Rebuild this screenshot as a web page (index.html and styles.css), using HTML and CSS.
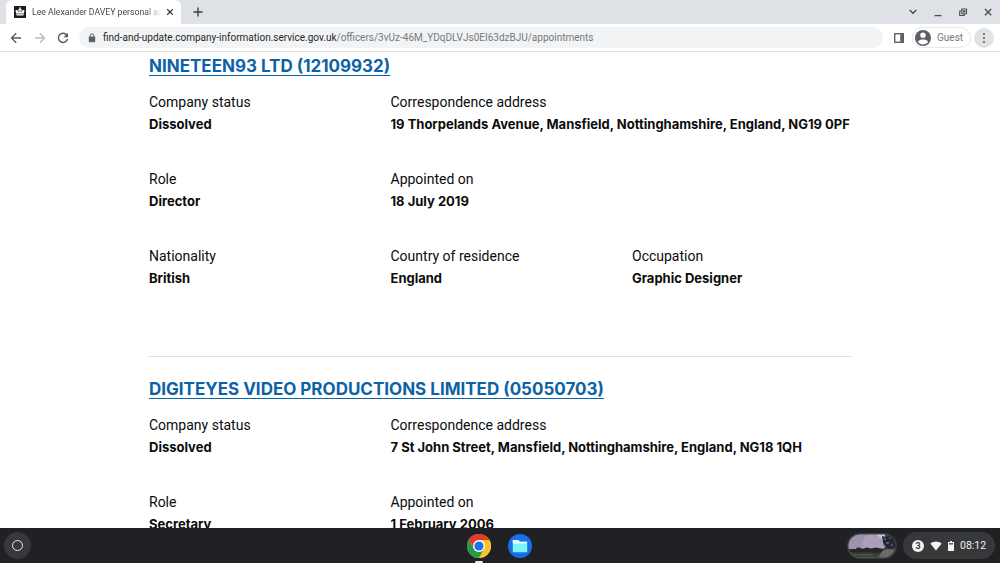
FILE: index.html
```html
<!DOCTYPE html>
<html lang="en">
<head>
  <meta charset="UTF-8">
  <meta name="viewport" content="width=device-width, initial-scale=1.0">
  <title>Lee Alexander DAVEY personal appointments</title>
  <link rel="stylesheet" href="styles.css">
</head>
<body>
  <!-- Tab strip -->
  <div class="tab-strip">
    <div class="tab">
      <svg class="favicon" viewBox="0 0 12 12">
        <rect width="12" height="12" fill="#1b1d1f"/>
        <path d="M2.6 9.6 2 6.2C1 5.3 1.5 4 2.7 4.1c.8 0 1.2.7 1 1.4l.9.6-.1-1.7c-.5-.5-.2-1.2.4-1.3l.6.2V2.4h-.4v-.6h.5v-.5h.8v.5h.5v.6h-.4v.9l.6-.2c.6.1.9.8.4 1.3l-.1 1.7.9-.6c-.2-.7.2-1.4 1-1.4C10.500 4 11 5.300 10 6.200l-.6 3.400z" fill="#fff"/>
        <path d="M2.500 7.800h7M6 4.200v2" stroke="#1b1d1f" stroke-width=".6"/>
      </svg>
      <span class="tab-title">Lee Alexander DAVEY personal appointments</span>
      <svg class="tab-close" viewBox="0 0 8 8"><path d="M1.200 1.200l5.600 5.600M6.800 1.200L1.200 6.800" stroke="#3c4043" stroke-width="1.300"/></svg>
    </div>
    <svg class="new-tab" viewBox="0 0 10 10"><path d="M5 .5v9M.5 5h9" stroke="#3c4043" stroke-width="1.400"/></svg>
    <div class="window-buttons">
      <svg viewBox="0 0 10 10"><path d="M1.700 3l3.300 3.300L8.300 3" fill="none" stroke="#4a4d51" stroke-width="1.400"/></svg>
      <svg viewBox="0 0 10 10"><path d="M1.500 8.600h7" stroke="#4a4d51" stroke-width="1.300"/></svg>
      <svg viewBox="0 0 10 10"><path d="M3.800 2h4.700v4.700H3.800zM3.800 4H1.700v4.500h4.500V6.700M5.500 3.700h1.300V5H5.500z" fill="none" stroke="#4a4d51" stroke-width="1.100"/></svg>
      <svg viewBox="0 0 10 10"><path d="M2 2l6.200 6.200M8.200 2L2 8.200" stroke="#4a4d51" stroke-width="1.400"/></svg>
    </div>
  </div>

  <!-- Toolbar -->
  <div class="toolbar">
    <div class="nav-buttons">
      <svg viewBox="0 0 12 12"><path d="M11 6H2M6.200 1.300L1.500 6l4.700 4.700" fill="none" stroke="#55585c" stroke-width="1.300"/></svg>
      <svg viewBox="0 0 12 12"><path d="M1 6h9M5.800 1.300L10.500 6l-4.700 4.700" fill="none" stroke="#babcbe" stroke-width="1.300"/></svg>
      <svg viewBox="0 0 12 12"><path d="M9.800 3.200A4.600 4.600 0 1 0 10.500 7" fill="none" stroke="#55585c" stroke-width="1.400"/><path d="M11 .8v4.500H6.500z" fill="#55585c"/></svg>
    </div>
    <div class="address-bar">
      <svg class="lock" viewBox="0 0 8 10"><path d="M2.200 4V2.700a1.800 1.800 0 0 1 3.600 0V4" fill="none" stroke="#5f6368"/><rect x=".8" y="3.500" width="6.400" height="5.700" rx=".7" fill="#5f6368"/></svg>
      <span class="url"><span class="host">find-and-update.company-information.service.gov.uk</span>/officers/3vUz-46M_YDqDLVJs0EI63dzBJU/appointments</span>
    </div>
    <svg class="side-panel" viewBox="0 0 10 10"><rect x=".7" y=".7" width="8.600" height="8.600" fill="none" stroke="#5f6368" stroke-width="1.400"/><path d="M6.200 1h3v8h-3z" fill="#5f6368"/></svg>
    <div class="profile">
      <svg viewBox="0 0 16 16"><circle cx="8" cy="8" r="8" fill="#5b5f64"/><circle cx="8" cy="5.200" r="2.700" fill="#fff"/><path d="M2.800 11.800C3.800 9.900 6 9.400 8 9.400s4.200.5 5.200 2.400C12 13.600 10 14.600 8 14.600s-4-1-5.200-2.800z" fill="#fff"/></svg>
      <span>Guest</span>
    </div>
    <div class="menu-button">
      <svg viewBox="0 0 4 12"><g fill="#5f6368"><circle cx="2" cy="2" r="1.100"/><circle cx="2" cy="6" r="1.100"/><circle cx="2" cy="10" r="1.100"/></g></svg>
    </div>
  </div>

  <!-- Page -->
  <main class="content">
    <section class="appointment">
      <h2><a class="name-1" href="#">NINETEEN93 LTD (12109932)</a></h2>
      <div class="grid">
        <dl>
          <dt>Company status</dt>
          <dd>Dissolved</dd>
        </dl>
        <dl class="wide">
          <dt>Correspondence address</dt>
          <dd>19 Thorpelands Avenue, Mansfield, Nottinghamshire, England, NG19 0PF</dd>
        </dl>
        <dl>
          <dt>Role</dt>
          <dd>Director</dd>
        </dl>
        <dl class="wide">
          <dt>Appointed on</dt>
          <dd class="date">18 July 2019</dd>
        </dl>
        <dl>
          <dt>Nationality</dt>
          <dd>British</dd>
        </dl>
        <dl>
          <dt>Country of residence</dt>
          <dd>England</dd>
        </dl>
        <dl>
          <dt>Occupation</dt>
          <dd>Graphic Designer</dd>
        </dl>
      </div>
    </section>

    <section class="appointment">
      <h2><a class="name-2" href="#">DIGITEYES VIDEO PRODUCTIONS LIMITED (05050703)</a></h2>
      <div class="grid">
        <dl>
          <dt>Company status</dt>
          <dd>Dissolved</dd>
        </dl>
        <dl class="wide">
          <dt>Correspondence address</dt>
          <dd>7 St John Street, Mansfield, Nottinghamshire, England, NG18 1QH</dd>
        </dl>
        <dl>
          <dt>Role</dt>
          <dd>Secretary</dd>
        </dl>
        <dl class="wide">
          <dt>Appointed on</dt>
          <dd class="date">1 February 2006</dd>
        </dl>
      </div>
    </section>
  </main>

  <!-- Shelf -->
  <footer class="shelf">
    <div class="shelf-side">
      <div class="launcher"><span></span></div>
    </div>
    <div class="apps">
      <div class="app running">
        <svg viewBox="0 0 24 24">
          <circle cx="12" cy="12" r="12" fill="#fbc02d"/>
          <path d="M12 12L1.600 6A12 12 0 0 1 22.400 6z" fill="#e33b2e"/>
          <path d="M12 6h10.400A12 12 0 0 0 1.600 6L6.800 15z" fill="#e33b2e"/>
          <path d="M1.600 6A12 12 0 0 0 12 24l5.200-9L12 12 6.800 15z" fill="#269a48"/>
          <path d="M22.400 6A12 12 0 0 1 12 24l5.200-9L12 6z" fill="#fbc02d"/>
          <circle cx="12" cy="12" r="6" fill="#fff"/>
          <circle cx="12" cy="12" r="4.600" fill="#1a73e8"/>
        </svg>
      </div>
      <div class="app">
        <svg viewBox="0 0 24 24">
          <circle cx="12" cy="12" r="12" fill="#1a6fe8"/>
          <path d="M4.800 6h5.400l1.800 1.800h7.200v10.400H4.800z" fill="#7df4fb"/>
          <path d="M4.800 6h5.400l1.800 1.800h6.800v1.700H4.800z" fill="#e8ffff"/>
        </svg>
      </div>
    </div>
    <div class="shelf-side right">
      <!-- Recent photos preview -->
      <svg class="photos" viewBox="0 0 50 26">
        <defs>
          <clipPath id="pill"><rect x="1.500" y="1.500" width="47" height="23" rx="11.500"/></clipPath>
          <clipPath id="front"><rect x="1.500" y="1.500" width="35" height="23" rx="11.500"/></clipPath>
        </defs>
        <rect width="50" height="26" rx="13" fill="#3b3b3d"/>
        <g clip-path="url(#pill)">
          <rect width="50" height="26" fill="#454a3f"/>
          <path d="M28 0h10v15H28z" fill="#c6c7dc"/>
          <path d="M35 3l4 1 3-2 5 4 2 8-5 2-6-1-2-4z" fill="#242639"/>
          <path d="M37 6h2M42 5h1.500M39 10h3M44 12h2M37 13h2" stroke="#8587a5" stroke-width="1.200"/>
          <path d="M34 19l6-3 8 1-7 8h-9z" fill="#6d6b63"/>
        </g>
        <g clip-path="url(#front)">
          <rect width="38" height="26" fill="#9c93ad"/>
          <ellipse cx="26" cy="11" rx="11" ry="10" fill="#aaa0ba"/>
          <path d="M0 16h38v10H0z" fill="#34402b"/>
          <path d="M0 17l9-1 1-1.500 4 .5 1 1 5-1.500 4 1 5-1 8 1.500v3l-9 1-9-1-9 .5L0 19z" fill="#27232b"/>
          <path d="M6 22h20" stroke="#465236" stroke-width="2"/>
        </g>
      </svg>
      <div class="status">
        <span class="badge">3</span>
        <svg class="wifi" viewBox="0 0 12 10"><path d="M.3 2.600C3.500-.1 8.500-.1 11.700 2.600L6 9.600z" fill="#f1f3f4"/></svg>
        <svg class="battery" viewBox="0 0 6 10"><path d="M2 0h2v1h2v9H0V1h2z" fill="#f1f3f4"/><path d="M1 2h4v1.600H1z" fill="#5d5d5f"/></svg>
        <span class="clock">08:12</span>
      </div>
    </div>
  </footer>
</body>
</html>
```

FILE: styles.css
```css
* {
  box-sizing: border-box;
}

body {
  margin: 0;
  height: 563px;
  display: flex;
  flex-direction: column;
  overflow: hidden;
  background: #fff;
  font-family: Roboto, sans-serif;
}

svg {
  display: block;
  flex: none;
}

/* Tab strip */
.tab-strip {
  display: flex;
  align-items: center;
  flex: none;
  height: 24px;
  padding-left: 6px;
  background: #dee1e6;
}

.tab {
  display: flex;
  align-items: center;
  width: 175px;
  height: 24px;
  padding-left: 8px;
  border-radius: 6px 6px 0 0;
  background: #fff;
}

.favicon {
  width: 12px;
  height: 12px;
}

.tab-title {
  width: 129px;
  margin-left: 6px;
  overflow: hidden;
  white-space: nowrap;
  font-size: 8.7px;
  color: #45494d;
  -webkit-mask-image: linear-gradient(to right, #000 114px, transparent 129px);
  mask-image: linear-gradient(to right, #000 114px, transparent 129px);
}

.tab-close {
  width: 8px;
  height: 8px;
  margin-left: 5px;
}

.new-tab {
  width: 10px;
  height: 10px;
  margin-left: 12px;
}

.window-buttons {
  display: flex;
  gap: 15px;
  margin-left: auto;
  padding-right: 7px;
}

.window-buttons svg {
  width: 10px;
  height: 10px;
}

/* Toolbar */
.toolbar {
  display: flex;
  align-items: center;
  flex: none;
  height: 28px;
  padding: 0 6px 0 10px;
  border-bottom: 1px solid #e0e2e4;
}

.nav-buttons {
  display: flex;
  gap: 11.5px;
}

.nav-buttons svg {
  width: 12px;
  height: 12px;
}

.address-bar {
  display: flex;
  align-items: center;
  width: 804px;
  height: 21px;
  margin-left: 10px;
  padding-left: 9px;
  border-radius: 11px;
  background: #f1f3f4;
}

.lock {
  width: 8px;
  height: 10px;
}

.url {
  margin-left: 7px;
  font-size: 10px;
  white-space: nowrap;
  color: #75797d;
}

.host {
  color: #25282b;
}

.side-panel {
  width: 10px;
  height: 10px;
  margin-left: 11px;
}

.profile {
  display: flex;
  align-items: center;
  gap: 6px;
  width: 59px;
  height: 21px;
  margin-left: 8px;
  padding-left: 2px;
  border: 1px solid #e6e8ea;
  border-radius: 11px;
  font-size: 10px;
  color: #75797d;
}

.profile svg {
  width: 16px;
  height: 16px;
}

.menu-button {
  display: flex;
  align-items: center;
  justify-content: center;
  width: 20px;
  height: 20px;
  margin-left: auto;
  border-radius: 50%;
  background: #e2e3e4;
}

.menu-button svg {
  width: 4px;
  height: 12px;
}

/* Page */
.content {
  flex: 1;
  min-height: 0;
  overflow: hidden;
  padding: 0 149px;
}

.appointment {
  height: 305px;
  border-bottom: 1px solid #dfe1e2;
}

.appointment + .appointment {
  padding-top: 18px;
}

h2 {
  margin: 0 0 11px;
  line-height: 28px;
  font-family: Inter, sans-serif;
  font-size: 17px;
  font-weight: 700;
  white-space: nowrap;
}

h2 a {
  color: #0c62a6;
  text-decoration-thickness: 1px;
  text-underline-offset: 3px;
}

.grid {
  display: grid;
  grid-template-columns: repeat(3, 241.5px);
  row-gap: 33px;
}

.wide {
  grid-column: span 2;
}

dl {
  margin: 0;
  line-height: 22px;
  white-space: nowrap;
  color: #0b0c0c;
}

dt {
  font-size: 14px;
}

dd {
  margin: 0;
  font-family: Inter, sans-serif;
  font-size: 13px;
  font-weight: 700;
}

/* Shelf */
.shelf {
  display: flex;
  align-items: center;
  flex: none;
  height: 35px;
  background: #202124;
}

.shelf-side {
  display: flex;
  align-items: center;
  flex: 1;
  padding-left: 4px;
}

.shelf-side.right {
  justify-content: flex-end;
  gap: 6px;
  padding: 0 5px 0 0;
}

.launcher {
  display: flex;
  align-items: center;
  justify-content: center;
  width: 27px;
  height: 27px;
  border-radius: 50%;
  background: #37383a;
}

.launcher span {
  width: 11px;
  height: 11px;
  border: 1.5px solid #e8eaed;
  border-radius: 50%;
}

.apps {
  display: flex;
  gap: 17px;
}

.app {
  position: relative;
}

.app svg {
  width: 24px;
  height: 24px;
}

.running::after {
  content: "";
  position: absolute;
  left: 8px;
  bottom: -5px;
  width: 8px;
  height: 2px;
  border-radius: 1px;
  background: #e8eaed;
}

.photos {
  width: 50px;
  height: 26px;
}

.status {
  display: flex;
  align-items: center;
  width: 92px;
  height: 27px;
  padding-left: 9px;
  border-radius: 14px;
  background: #37383a;
  color: #f1f3f4;
}

.badge {
  width: 12px;
  height: 12px;
  border-radius: 50%;
  background: #f1f3f4;
  color: #37383a;
  font-size: 9px;
  font-weight: 700;
  line-height: 12px;
  text-align: center;
}

.wifi {
  width: 12px;
  height: 10px;
  margin-left: 6px;
}

.battery {
  width: 6px;
  height: 10px;
  margin-left: 6px;
}

.clock {
  margin-left: 6px;
  font-size: 10.5px;
}
```
